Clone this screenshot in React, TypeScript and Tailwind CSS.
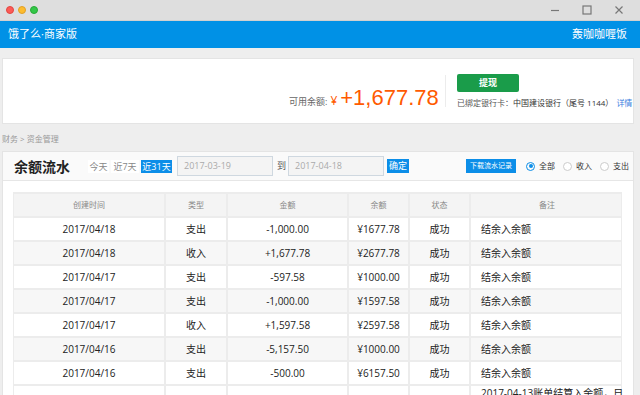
import React from 'react';

const cjk = '"Open Sans", "Noto Sans CJK SC", sans-serif';

const rows = [
  ['2017/04/18', '支出', '-1,000.00', '¥1677.78', '成功', '结余入余额'],
  ['2017/04/18', '收入', '+1,677.78', '¥2677.78', '成功', '结余入余额'],
  ['2017/04/17', '支出', '-597.58', '¥1000.00', '成功', '结余入余额'],
  ['2017/04/17', '支出', '-1,000.00', '¥1597.58', '成功', '结余入余额'],
  ['2017/04/17', '收入', '+1,597.58', '¥2597.58', '成功', '结余入余额'],
  ['2017/04/16', '支出', '-5,157.50', '¥1000.00', '成功', '结余入余额'],
  ['2017/04/16', '支出', '-500.00', '¥6157.50', '成功', '结余入余额'],
];

const cols = 'grid grid-cols-[152px_62px_121px_61px_61px_152px]';

const App = () => {
  return (
    <div className="w-[640px] h-[395px] overflow-hidden bg-[#eeeeee] whitespace-nowrap" style={{ fontFamily: cjk }}>
      {/* window title bar */}
      <div className="h-[21px] bg-[#dedede] border-b border-[#d0d0d0] flex items-center px-[6px]">
        <div className="flex gap-[4px]">
          <span className="w-[8px] h-[8px] rounded-full bg-[#fc5b57] border border-[#e24640]" />
          <span className="w-[8px] h-[8px] rounded-full bg-[#fdbc2e] border border-[#e0a028]" />
          <span className="w-[8px] h-[8px] rounded-full bg-[#33c748] border border-[#27aa35]" />
        </div>
        <div className="ml-auto flex items-center gap-[22px] pr-[10px] text-[#777]">
          <svg width="10" height="10" viewBox="0 0 10 10"><path d="M1 5.5h8" stroke="currentColor" strokeWidth="1.2" /></svg>
          <svg width="10" height="10" viewBox="0 0 10 10"><rect x="1" y="1" width="8" height="8" fill="none" stroke="currentColor" strokeWidth="1.2" /></svg>
          <svg width="10" height="10" viewBox="0 0 10 10"><path d="M1.5 1.5l7 7M8.5 1.5l-7 7" stroke="currentColor" strokeWidth="1.2" /></svg>
        </div>
      </div>

      {/* app header */}
      <div className="h-[27px] bg-[#0091e6] flex items-center justify-between px-[8px] text-white text-[11px]">
        <span>饿了么·商家版</span>
        <span className="pr-[5px]">轰咖咖喱饭</span>
      </div>

      {/* balance card */}
      <div className="mt-[10px] ml-[2px] w-[632px] h-[66px] bg-white border border-[#e4e4e4] flex items-center pl-[286px]">
        <div className="flex items-baseline mt-[14px] w-[156px] shrink-0">
          <span className="text-[9px] text-[#666]">可用余额:</span>
          <span className="ml-[3px] text-[12px] text-[#ff5a00]">¥</span>
          <span className="ml-[3px] text-[22px] leading-none text-[#ff5a00]" style={{ fontFamily: '"Liberation Sans", sans-serif' }}>+1,677.78</span>
        </div>
        <div className="w-px h-[32px] bg-[#ececec] shrink-0" />
        <div className="ml-[11px] flex flex-col shrink-0">
          <button className="w-[62px] h-[18px] bg-[#1a9c4a] rounded-[2px] text-white text-[9px] font-bold">提现</button>
          <div className="mt-[5px] text-[8px] text-[#555]">
            已绑定银行卡：<span className="text-[#333]">中国建设银行（尾号 1144）</span>
            <span className="ml-[3px] text-[#3a7ee0]">详情</span>
          </div>
        </div>
      </div>

      {/* breadcrumb */}
      <div className="mt-[10px] ml-[2px] text-[8px] text-[#999] leading-[10px]">财务 &gt; 资金管理</div>

      {/* flow card */}
      <div className="mt-[7px] ml-[2px] w-[632px] h-[300px] bg-white border border-[#e4e4e4]">
        <div className="h-[29px] bg-[#fafafa] border-b border-[#e6e6e6] flex items-center pl-[11px] text-[9px]">
          <span className="text-[14px] font-bold text-[#222] w-[74px] shrink-0">余额流水</span>
          <div className="flex items-center gap-[2px] text-[#888] shrink-0">
            <span className="w-[21px] text-center h-[13px] leading-[13px] bg-white">今天</span>
            <span className="w-[28px] text-center h-[13px] leading-[13px] bg-white">近7天</span>
            <span className="w-[31px] text-center h-[13px] leading-[13px] bg-[#0c8ee8] text-white">近31天</span>
          </div>
          <div className="ml-[5px] w-[96px] shrink-0 h-[20px] border border-[#cfd8e0] bg-[#f4f4f4] flex items-center pl-[6px] text-[#aaa]">2017-03-19</div>
          <span className="ml-[4px] w-[10px] text-[#555] shrink-0">到</span>
          <div className="ml-[1px] w-[96px] shrink-0 h-[20px] border border-[#cfd8e0] bg-[#f4f4f4] flex items-center pl-[6px] text-[#aaa]">2017-04-18</div>
          <span className="ml-[3px] w-[22px] text-center h-[14px] leading-[14px] bg-[#0c8ee8] text-white shrink-0">确定</span>
          <span className="ml-[57px] w-[50px] text-center h-[14px] leading-[14px] bg-[#0c8ee8] text-white text-[7px] shrink-0">下载流水记录</span>
          <div className="ml-[10px] flex items-center gap-[8px] text-[#333] text-[8px] shrink-0">
            <span className="flex items-center gap-[4px]">
              <span className="w-[9px] h-[9px] rounded-full border border-[#0c8ee8] flex items-center justify-center">
                <span className="w-[4px] h-[4px] rounded-full bg-[#0c8ee8]" />
              </span>全部
            </span>
            <span className="flex items-center gap-[4px]">
              <span className="w-[9px] h-[9px] rounded-full border border-[#ccc] bg-white" />收入
            </span>
            <span className="flex items-center gap-[4px]">
              <span className="w-[9px] h-[9px] rounded-full border border-[#ccc] bg-white" />支出
            </span>
          </div>
        </div>

        {/* table */}
        <div className="mt-[11px] ml-[10px] w-[609px] border-l border-r border-t-2 border-[#ececec] text-[10px] text-[#222]">
          <div className={`${cols} h-[24px] bg-[#f4f4f4] text-[8px] text-[#888] border-b-2 border-[#ececec]`}>
            {['创建时间', '类型', '金额', '余额', '状态', '备注'].map((h, i) => (
              <div key={h} className={`flex items-center justify-center ${i < 5 ? 'border-r-2 border-[#ececec]' : ''}`}>{h}</div>
            ))}
          </div>
          {rows.map((r, ri) => (
            <div key={ri} className={`${cols} h-[24px] border-b-2 border-[#ececec] ${ri % 2 === 1 ? 'bg-[#f7f7f7]' : 'bg-white'}`}>
              {r.map((c, i) => (
                <div
                  key={i}
                  className={`flex items-center ${i === 5 ? 'justify-start pl-[10px]' : 'justify-center border-r-2 border-[#ececec]'}`}
                >
                  {c}
                </div>
              ))}
            </div>
          ))}
          <div className={`${cols} h-[40px] bg-white`}>
            {[0, 1, 2, 3, 4].map((i) => (
              <div key={i} className="border-r-2 border-[#ececec]" />
            ))}
            <div className="pl-[10px] leading-[12px] pt-[1px]">2017-04-13账单结算入余额，日</div>
          </div>
        </div>
      </div>
    </div>
  );
};

export default App;
